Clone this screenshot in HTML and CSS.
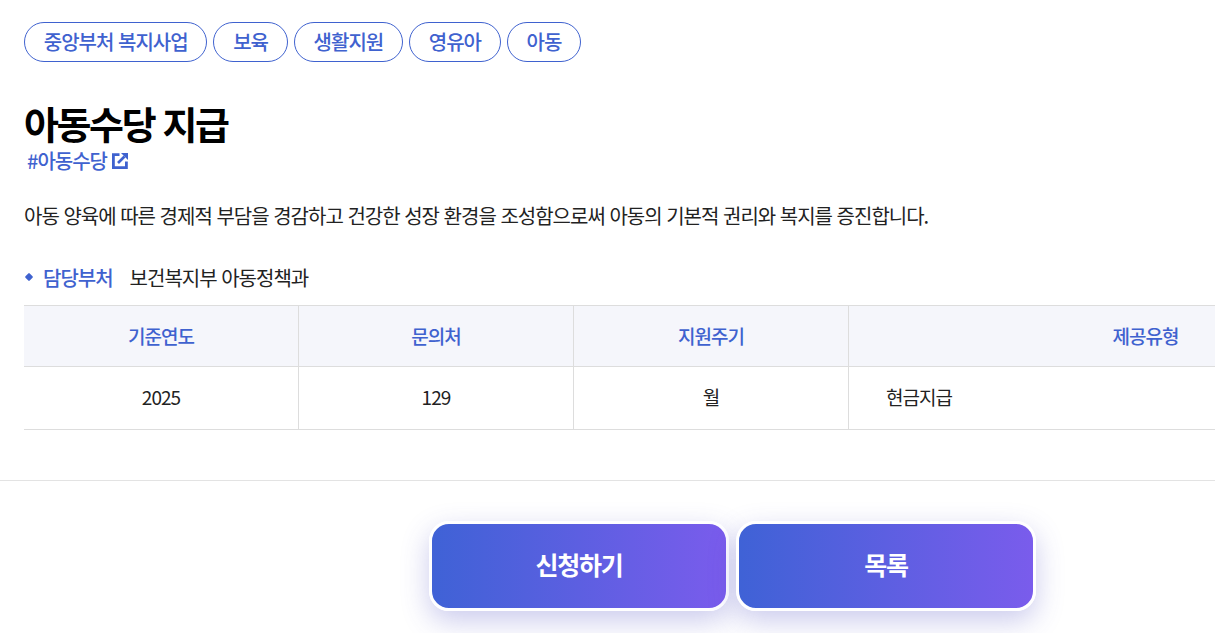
FILE: index.html
```html
<!DOCTYPE html>
<html lang="ko">
<head>
<meta charset="utf-8">
<title>아동수당 지급</title>
<link rel="stylesheet" href="styles.css">
</head>
<body>
<main class="page">
  <section class="content">
    <ul class="tags">
      <li class="tag">중앙부처 복지사업</li>
      <li class="tag">보육</li>
      <li class="tag">생활지원</li>
      <li class="tag">영유아</li>
      <li class="tag">아동</li>
    </ul>
    <h1 class="title">아동수당 지급</h1>
    <a class="hash" href="#">#아동수당<svg class="ext" viewBox="0 0 16 16" width="16" height="16" aria-hidden="true"><path d="M7.500 1.600H1.400v13h13V8.500" fill="none" stroke="currentColor" stroke-width="2.800"/><path d="M9 0h7v7z" fill="currentColor"/><path d="M6 10l6.500-6.500" fill="none" stroke="currentColor" stroke-width="2.600"/></svg></a>
    <p class="desc">아동 양육에 따른 경제적 부담을 경감하고 건강한 성장 환경을 조성함으로써 아동의 기본적 권리와 복지를 증진합니다.</p>
    <div class="dept">
      <span class="dot"></span>
      <span class="dept-label">담당부처</span>
      <span class="dept-name">보건복지부 아동정책과</span>
    </div>
    <div class="table-wrap">
      <table class="info">
        <thead>
          <tr><th class="c">기준연도</th><th class="c">문의처</th><th class="c">지원주기</th><th class="wide">제공유형</th></tr>
        </thead>
        <tbody>
          <tr><td class="c">2025</td><td class="c">129</td><td class="c">월</td><td class="left">현금지급</td></tr>
        </tbody>
      </table>
    </div>
  </section>
  <div class="actions">
    <a class="btn" href="#">신청하기</a>
    <a class="btn" href="#">목록</a>
  </div>
</main>
</body>
</html>
```
FILE: styles.css
```css
* { box-sizing: border-box; }
html, body { margin: 0; padding: 0; }
body {
  background: #fff;
  color: #222;
  font-family: "Noto Sans CJK KR", "Noto Sans", sans-serif;
  overflow: hidden;
  height: 633px;
}
.page { width: 1215px; overflow: hidden; height: 633px; }
.content {
  padding: 22px 0 50px 24px;
  border-bottom: 1px solid #e3e3e3;
  height: 481px;
}
.tags { display: flex; gap: 6px; list-style: none; margin: 0; padding: 0; }
.tag {
  height: 40px;
  padding: 0 18.8px;
  border: 1px solid #3f62cf;
  border-radius: 20px;
  color: #3f62cf;
  font-size: 20px;
  font-weight: 500;
  line-height: 38px;
  letter-spacing: -1px;
}
.title {
  margin: 37px 0 0;
  font-size: 38px;
  font-weight: 700;
  line-height: 48px;
  letter-spacing: -2.4px;
  color: #000;
}
.hash {
  display: flex;
  align-items: center;
  margin-left: 3px;
  margin-top: 2px;
  height: 24px;
  color: #3f62cf;
  font-size: 20px;
  font-weight: 500;
  line-height: 24px;
  letter-spacing: -1px;
  text-decoration: none;
}
.ext { margin-left: 5px; }
.desc {
  margin: 29px 0 0;
  font-size: 20px;
  line-height: 28px;
  letter-spacing: -1px;
  color: #222;
}
.dept { display: flex; align-items: center; margin-top: 33px; height: 28px; font-size: 20px; letter-spacing: -1px; }
.dot { width: 6px; height: 6px; background: #3f62cf; transform: rotate(45deg); border-radius: 1px; margin: 0 0 0 2px; }
.dept-label { margin-left: 11px; color: #3f62cf; font-weight: 500; }
.dept-name { margin-left: 17px; color: #222; font-weight: 400; }
.table-wrap { margin-top: 14px; width: 1191px; overflow: hidden; }
.info { border-collapse: separate; border-spacing: 0; table-layout: fixed; width: 1418px; font-size: 19px; letter-spacing: -0.95px; }
.info th, .info td { border-right: 1px solid #ddd; border-bottom: 1px solid #ddd; padding: 0; font-weight: 400; }
.info th { background: #f5f6fb; color: #3f62cf; font-weight: 500; height: 62px; border-top: 1px solid #ddd; padding-bottom: 2px; }
.info td { height: 63px; color: #222; padding-bottom: 3px; }
.info th.c, .info td.c { width: 275px; text-align: center; }
.info th.wide { text-align: center; border-right: 0; }
.info td.left { text-align: left; padding-left: 37px; border-right: 0; }
.actions { display: flex; justify-content: flex-start; gap: 7px; padding: 40px 0 0 429px; }
.btn {
  display: flex;
  align-items: center;
  justify-content: center;
  width: 300px;
  height: 90px;
  border: 3px solid #fff;
  border-radius: 20px;
  background: linear-gradient(90deg, #3f62d6, #7a5cec);
  box-shadow: 0 10px 28px rgba(70, 70, 190, 0.28);
  color: #fff;
  font-size: 25px;
  font-weight: 700;
  letter-spacing: -1.25px;
  line-height: 1;
  padding-bottom: 4px;
  text-decoration: none;
}
```
